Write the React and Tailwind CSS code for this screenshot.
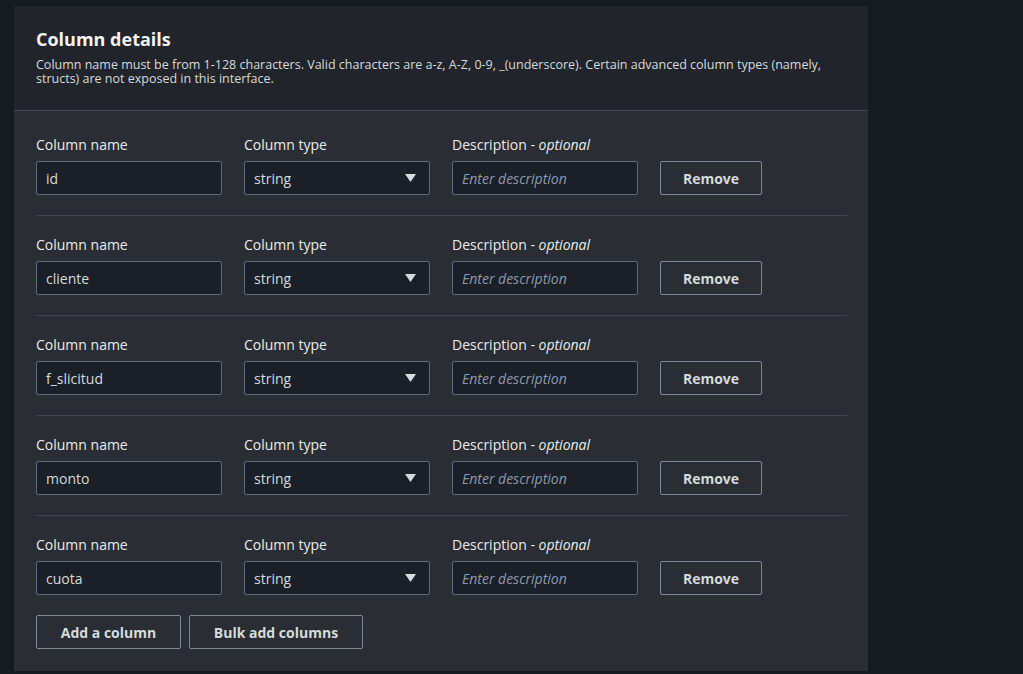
import React from 'react';

const COLUMNS = ['id', 'cliente', 'f_slicitud', 'monto', 'cuota'];

const font = { fontFamily: '"Open Sans", "Noto Sans", sans-serif' };

// ── Single column row ──────────────────────────────────────────────────
const ColumnRow = ({ name, last }) => (
  <div className={`pt-[21px] ${last ? '' : 'pb-[20px] border-b border-[#414750]'}`}>
    <div className="flex items-end gap-[22px]">
      <div className="w-[186px]">
        <div className="text-[14px] leading-[16px] text-[#e9ebed] mb-[8px]">Column name</div>
        <div className="h-[34px] bg-[#1a1f28] border border-[#5f6b7a] rounded-[2px] flex items-center px-[9px] text-[14px] text-[#d5dbdb]">
          {name}
        </div>
      </div>
      <div className="w-[186px]">
        <div className="text-[14px] leading-[16px] text-[#e9ebed] mb-[8px]">Column type</div>
        <div className="h-[34px] bg-[#1a1f28] border border-[#5f6b7a] rounded-[2px] flex items-center justify-between pl-[9px] pr-[13px] text-[14px] text-[#d5dbdb]">
          <span>string</span>
          <svg width="11" height="8" viewBox="0 0 11 8">
            <path d="M0 0h11L5.5 8z" fill="#d5dbdb" />
          </svg>
        </div>
      </div>
      <div className="w-[186px]">
        <div className="text-[14px] leading-[16px] text-[#e9ebed] mb-[8px]">
          Description - <span className="italic">optional</span>
        </div>
        <div className="h-[34px] bg-[#1a1f28] border border-[#5f6b7a] rounded-[2px] flex items-center px-[9px] text-[14px] italic text-[#8d99a8]">
          Enter description
        </div>
      </div>
      <button className="w-[102px] h-[34px] border border-[#7d8998] rounded-[2px] text-[14px] font-bold text-[#d5dbdb]">
        Remove
      </button>
    </div>
  </div>
);

export default function App() {
  return (
    <div className="min-h-screen bg-[#161a21] pl-[14px] pt-[6px]" style={font}>
      <div className="w-[854px] h-[665px] bg-[#2a2d33] flex flex-col">
        {/* Header */}
        <div className="bg-[#21242b] pt-[22px] pb-[24px] px-[22px] border-b border-[#414750]">
          <h2 className="text-[18px] leading-[22px] font-bold text-[#f2f3f3]">Column details</h2>
          <p className="mt-[8px] text-[12.5px] leading-[14px] text-[#d5dbdb] max-w-[800px]">
            Column name must be from 1-128 characters. Valid characters are a-z, A-Z, 0-9, _(underscore). Certain advanced column types (namely, structs) are not exposed in this interface.
          </p>
        </div>

        {/* Rows */}
        <div className="pl-[22px] pr-[21px] pt-[5px]">
          {COLUMNS.map((c, i) => (
            <ColumnRow key={c} name={c} last={i === COLUMNS.length - 1} />
          ))}
          <div className="flex gap-[8px] mt-[20px]">
            <button className="w-[145px] h-[34px] border border-[#7d8998] rounded-[2px] text-[14px] font-bold text-[#d5dbdb]">
              Add a column
            </button>
            <button className="w-[174px] h-[34px] border border-[#7d8998] rounded-[2px] text-[14px] font-bold text-[#d5dbdb]">
              Bulk add columns
            </button>
          </div>
        </div>
      </div>
    </div>
  );
}
